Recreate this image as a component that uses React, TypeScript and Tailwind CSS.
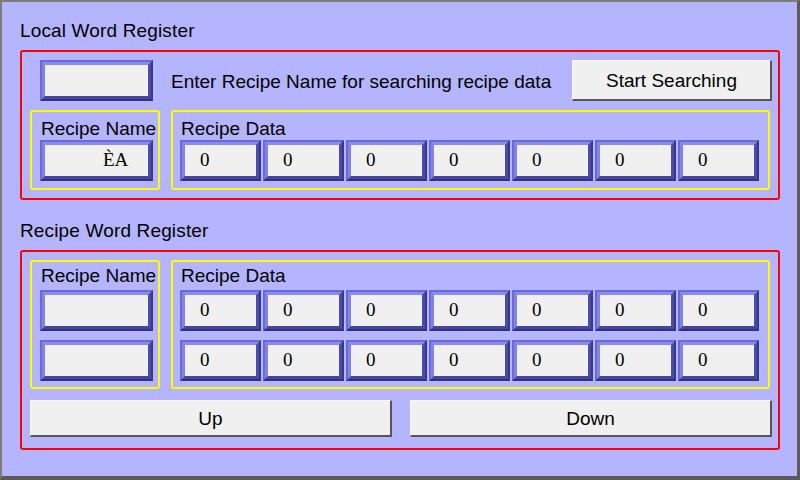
// Recipe register panel (HMI style)

const SANS = "font-['Liberation_Sans',Arial,sans-serif]"

function Field({ value = '', className = '', textClass = 'pl-[15px]' }: { value?: string; className?: string; textClass?: string }) {
  return (
    <div className={`h-[41px] border-2 border-t-[#6a6ad4] border-l-[#6a6ad4] border-b-[#323278] border-r-[#383884] ${className}`}>
      <div className="h-full border-[3px] border-t-[#8a8af0] border-l-[#8282ea] border-b-[#4646a0] border-r-[#4c4ca8]">
        <div className={`h-full bg-[#f0f0f0] flex items-center pb-[3px] ${textClass} font-['Liberation_Serif','Times_New_Roman',serif] text-[19px] text-black leading-none`}>
          {value}
        </div>
      </div>
    </div>
  )
}

function Button({ label, className = '' }: { label: string; className?: string }) {
  return (
    <div className={`flex items-center justify-center pt-[2px] bg-[#f0f0f0] border-t border-l border-t-[#fafafa] border-l-[#fafafa] border-b-2 border-r-2 border-b-[#555555] border-r-[#555555] text-[19px] text-black ${className}`}>
      {label}
    </div>
  )
}

function DataRow() {
  return (
    <div className="flex gap-[2px]">
      {Array.from({ length: 7 }).map((_, i) => (
        <Field key={i} value="0" className="w-[81px]" />
      ))}
    </div>
  )
}

export default function App() {
  return (
    <div className={`w-[800px] h-[480px] bg-[#b4b4ff] border-l-2 border-t-2 border-r-[3px] border-b-[4px] border-l-[#7c7c7c] border-t-[#7c7c7c] border-r-[#5a5a5a] border-b-[#5a5a5a] ${SANS} text-black`}>
      <div className="pl-[18px] pt-[19px] flex flex-col">
        {/* Local Word Register */}
        <div className="text-[19px] leading-[20px] h-[20px] tracking-[0.15px]">Local Word Register</div>
        <div className="mt-[9px] w-[760px] h-[150px] border-2 border-[#ff0000] rounded-[3px] pl-[8px] pt-[8px]">
          <div className="flex items-center h-[41px]">
            <Field className="ml-[10px] w-[113px]" />
            <div className="ml-[18px] pt-[2px] text-[19px] leading-none">Enter Recipe Name for searching recipe data</div>
            <Button label="Start Searching" className="ml-auto mr-[6px] w-[200px] h-[41px]" />
          </div>
          <div className="mt-[9px] flex gap-[11px]">
            <div className="w-[130px] h-[80px] border-2 border-[#ffff00] rounded-[3px] pl-[8px]">
              <div className="pl-[1px] text-[19px] leading-[20px] mt-[7px]">Recipe Name</div>
              <Field value="ÈA" className="mt-[1px] w-[113px]" textClass="pl-[58px]" />
            </div>
            <div className="w-[599px] h-[80px] border-2 border-[#ffff00] rounded-[3px] pl-[7px]">
              <div className="pl-[1px] text-[19px] leading-[20px] mt-[7px]">Recipe Data</div>
              <div className="mt-[1px]">
                <DataRow />
              </div>
            </div>
          </div>
        </div>

        {/* Recipe Word Register */}
        <div className="mt-[21px] text-[19px] leading-[20px] h-[20px] tracking-[0.15px]">Recipe Word Register</div>
        <div className="mt-[9px] w-[760px] h-[200px] border-2 border-[#ff0000] rounded-[3px] pl-[8px] pt-[8px]">
          <div className="flex gap-[11px]">
            <div className="w-[130px] h-[129px] border-2 border-[#ffff00] rounded-[3px] pl-[8px]">
              <div className="pl-[1px] text-[19px] leading-[20px] mt-[4px]">Recipe Name</div>
              <Field className="mt-[4px] w-[113px]" />
              <Field className="mt-[9px] w-[113px]" />
            </div>
            <div className="w-[599px] h-[129px] border-2 border-[#ffff00] rounded-[3px] pl-[7px]">
              <div className="pl-[1px] text-[19px] leading-[20px] mt-[4px]">Recipe Data</div>
              <div className="mt-[4px] flex flex-col gap-[9px]">
                <DataRow />
                <DataRow />
              </div>
            </div>
          </div>
          <div className="mt-[11px] flex">
            <Button label="Up" className="w-[362px] h-[37px]" />
            <Button label="Down" className="ml-[18px] w-[362px] h-[37px]" />
          </div>
        </div>
      </div>
    </div>
  )
}
